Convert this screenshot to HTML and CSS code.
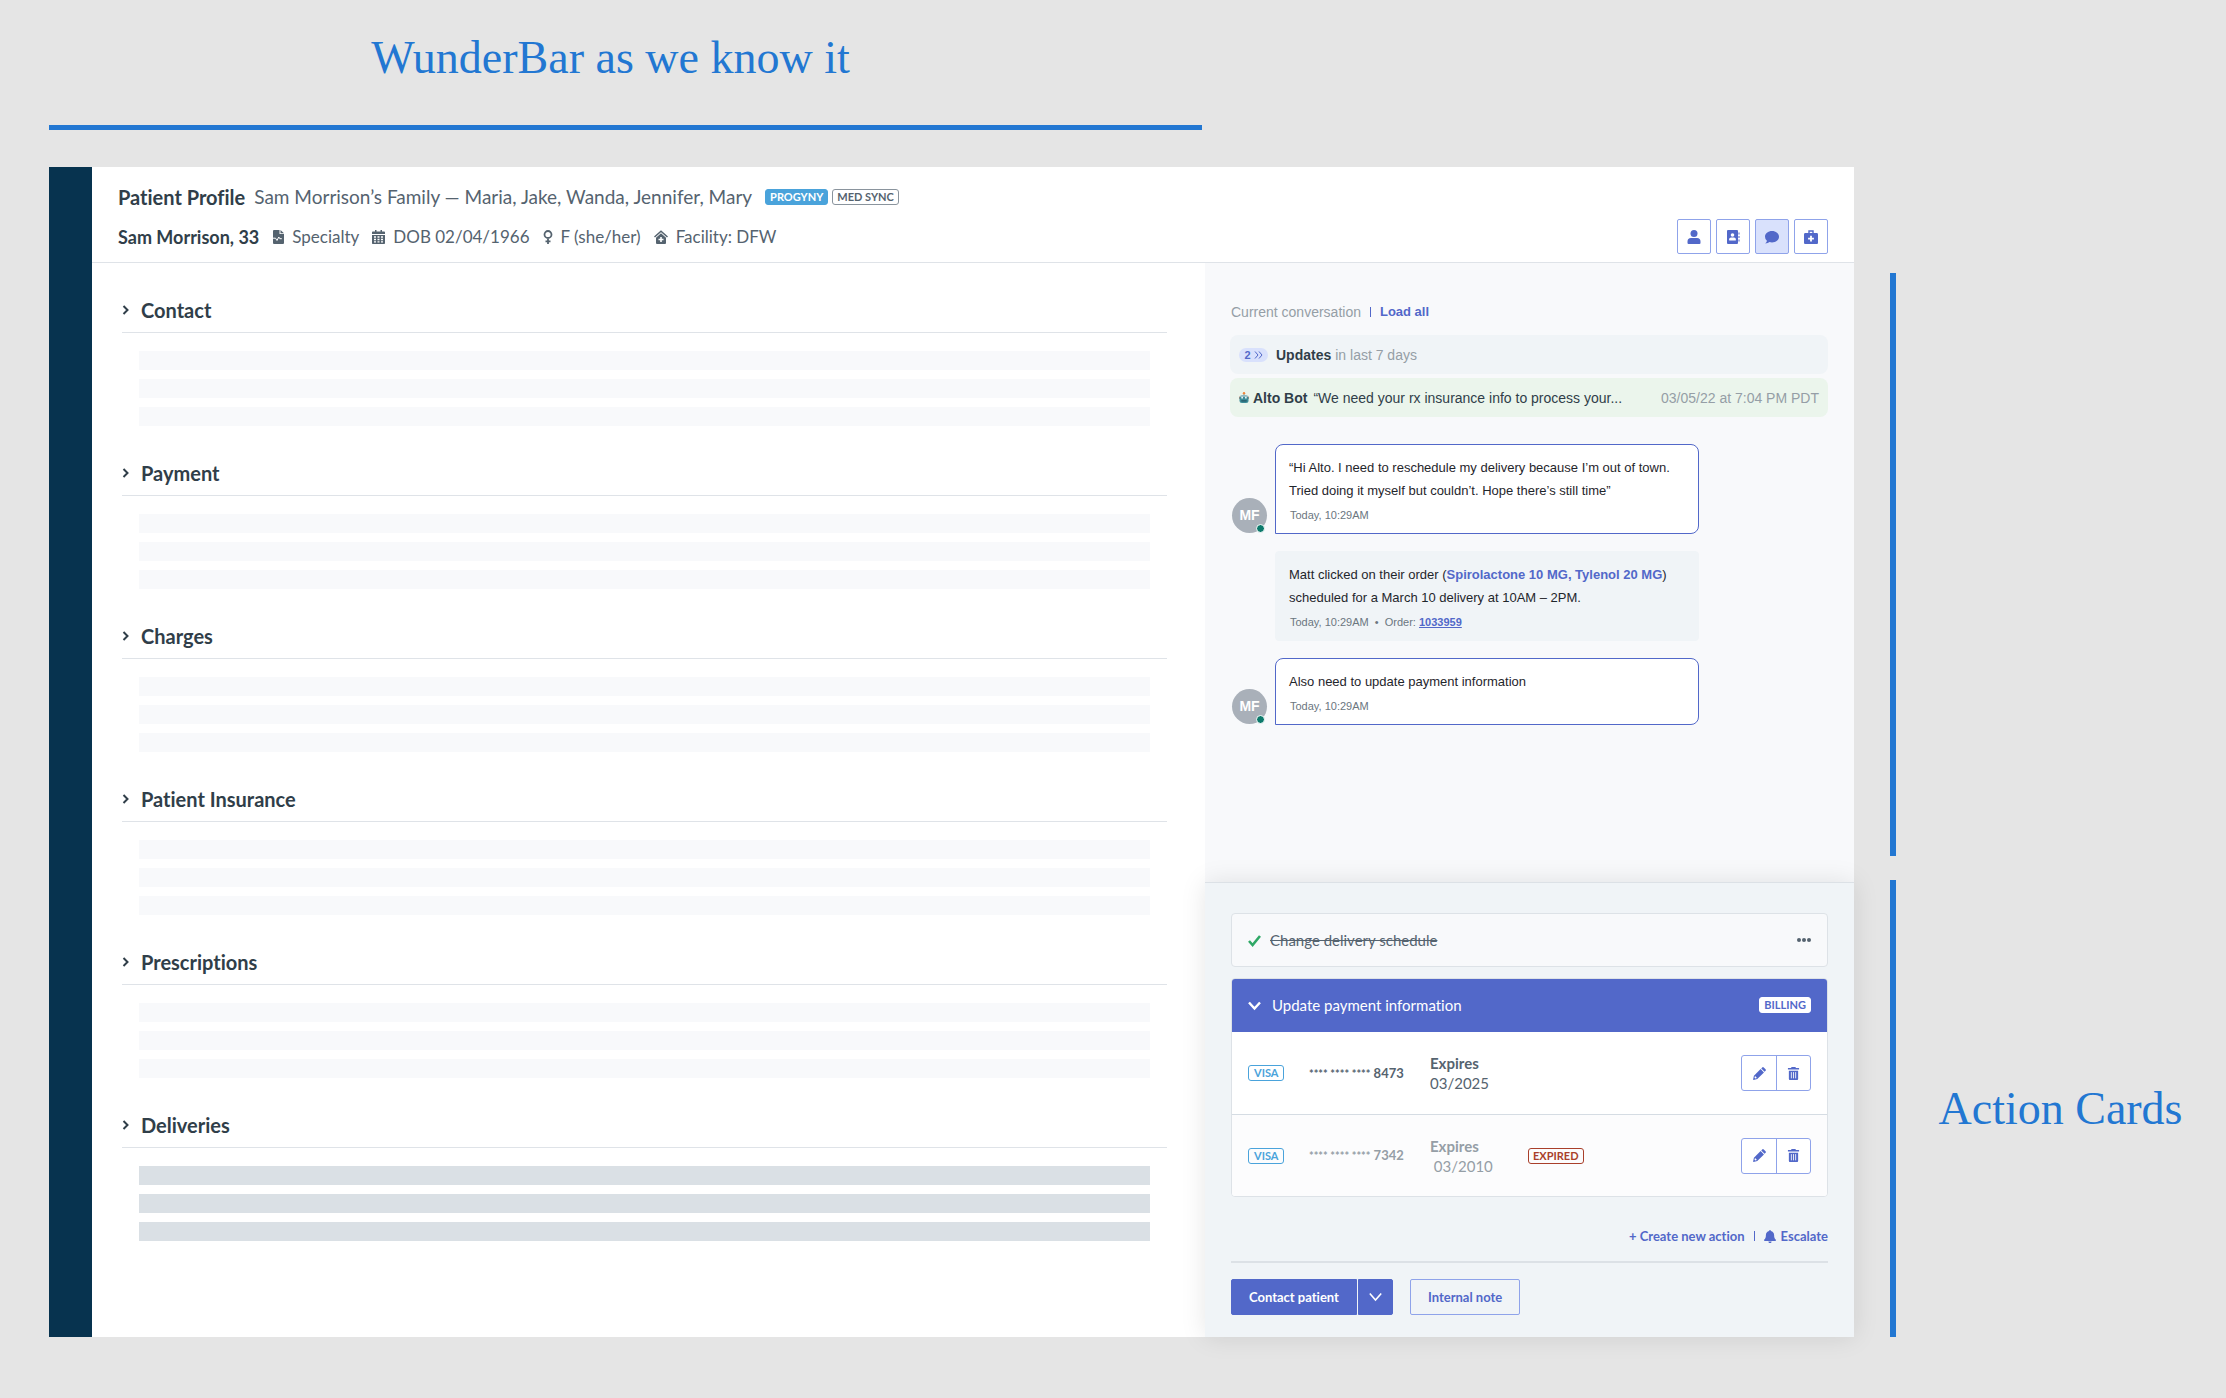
FILE: index.html
```html
<!DOCTYPE html>
<html lang="en">
<head>
    <meta charset="UTF-8">
    <meta name="viewport" content="width=device-width, initial-scale=1.0">
    <title>WunderBar</title>
    <link rel="stylesheet" href="styles.css">
</head>
<body>
    <!-- Icon sprite -->
    <svg class="sprite" aria-hidden="true">
        <symbol id="icon-right" viewBox="0 0 8 12"><path d="M1.500 2l4 4-4 4" fill="none" stroke="currentColor" stroke-width="2"/></symbol>
        <symbol id="icon-pencil" viewBox="0 0 14 14"><path d="M9.900.500a1.200 1.200 0 0 1 1.700 0l1.900 1.900a1.200 1.200 0 0 1 0 1.700l-1 1-3.600-3.600zM8.200 2.200l3.600 3.600-7.200 7.200L.600 13.900.100 13.400 1 9.400z"/><path d="M2.200 9.800l2 2-1.700.7-.9-.9z" fill="#fff"/></symbol>
        <symbol id="icon-trash" viewBox="0 0 14 14"><path d="M5 0h4l.7 1H13v1.800H1V1h3.300zM2 4h10v9a1 1 0 0 1-1 1H3a1 1 0 0 1-1-1z"/><path d="M4.700 5.500v6.700M7 5.500v6.700M9.300 5.500v6.700" stroke="#fff" stroke-width=".9"/></symbol>
    </svg>

    <div class="page">
        <div class="left-note">
            <h1 class="note">WunderBar as we know it</h1>
        </div>

        <div class="app">
            <nav class="sidebar"></nav>

            <header class="header">
                <div class="header-info">
                    <div class="profile-line">
                        <h2>Patient Profile</h2>
                        <span>Sam Morrison’s Family — Maria, Jake, Wanda, Jennifer, Mary</span>
                        <span class="tags">
                            <span class="tag tag-progyny">PROGYNY</span>
                            <span class="tag tag-sync">MED SYNC</span>
                        </span>
                    </div>
                    <div class="patient-line">
                        <strong>Sam Morrison, 33</strong>
                        <span class="fact">
                            <svg width="12" height="14" viewBox="0 0 12 14"><path d="M2 0h5.500v4H12v9a1 1 0 0 1-1 1H2a1 1 0 0 1-1-1V1a1 1 0 0 1 1-1zM8.500 0L12 3.200H8.500z"/><path d="M0 8.200h3.500l1.500 2.300 1.800-3.500 1 1.700h2" fill="none" stroke="#fff" stroke-width="1"/></svg>
                            Specialty
                        </span>
                        <span class="fact">
                            <svg width="13" height="14" viewBox="0 0 13 14"><path d="M3 0h1.500v1.500h4V0H10v1.500h2c.6 0 1 .4 1 1V4H0V2.500c0-.6.4-1 1-1h2zM0 5h13v8c0 .6-.4 1-1 1H1c-.6 0-1-.4-1-1z"/><path d="M2 6.300h2v1.500H2zm3.500 0h2v1.500h-2zm3.500 0h2v1.500H9zM2 8.800h2v1.400H2zm3.500 0h2v1.400h-2zm3.500 0h2v1.400H9zM2 11.300h2v1.300H2zm3.500 0h2v1.300h-2zm3.500 0h2v1.300H9z" fill="#fff"/></svg>
                            DOB 02/04/1966
                        </span>
                        <span class="fact">
                            <svg width="10" height="14" viewBox="0 0 10 14"><path d="M5 1a3.500 3.500 0 1 1 0 7 3.500 3.500 0 0 1 0-7zM5 8v6M2.500 11.300h5" fill="none" stroke="currentColor" stroke-width="1.800"/></svg>
                            F (she/her)
                        </span>
                        <span class="fact">
                            <svg width="14" height="14" viewBox="0 0 14 14"><path d="M.5 7L7 1.200 13.500 7" fill="none" stroke="currentColor" stroke-width="1.500"/><path d="M7 3.300l5 4.400V13a1 1 0 0 1-1 1H3a1 1 0 0 1-1-1V7.700z"/><path d="M6.200 7h1.600v1.700h1.700v1.600H7.800V12H6.200v-1.700H4.500V8.700h1.700z" fill="#fff"/></svg>
                            Facility: DFW
                        </span>
                    </div>
                </div>
                <div class="header-buttons">
                    <button class="icon-button" aria-label="Patient">
                        <svg width="14" height="14" viewBox="0 0 14 14"><circle cx="7" cy="3.500" r="3.500"/><path d="M4 8h6a3.500 3.500 0 0 1 3.500 3.500V13a1 1 0 0 1-1 1h-11a1 1 0 0 1-1-1v-1.500A3.500 3.500 0 0 1 4 8z"/></svg>
                    </button>
                    <button class="icon-button" aria-label="Address book">
                        <svg width="14" height="14" viewBox="0 0 14 14"><path d="M2 0h9a1 1 0 0 1 1 1v12a1 1 0 0 1-1 1H2a1 1 0 0 1-1-1V1a1 1 0 0 1 1-1zM12.500 2.500h1v2h-1zm0 3.500h1v2h-1zm0 3.500h1v2h-1z"/><circle cx="6.500" cy="5" r="1.800" fill="#fff"/><path d="M5 7.500h3c1 0 1.800.8 1.800 1.800v1.200H3.200V9.300C3.200 8.300 4 7.500 5 7.500z" fill="#fff"/></svg>
                    </button>
                    <button class="icon-button active" aria-label="Conversation">
                        <svg width="14" height="14" viewBox="0 0 14 14"><path d="M7 1c3.900 0 7 2.500 7 5.700s-3.100 5.700-7 5.700a8 8 0 0 1-2.500-.4C3.500 12.800 2 13.400.3 13.400c.8-.8 1.500-1.800 1.600-2.700A5.200 5.200 0 0 1 0 6.700C0 3.500 3.100 1 7 1z"/></svg>
                    </button>
                    <button class="icon-button" aria-label="Medical">
                        <svg width="14" height="14" viewBox="0 0 14 14"><path d="M5 3.500V1h4v2.500" fill="none" stroke="currentColor" stroke-width="1.400"/><path d="M1.300 3h11.400c.7 0 1.300.6 1.300 1.300v8.400c0 .7-.6 1.300-1.300 1.300H1.300C.6 14 0 13.400 0 12.700V4.300C0 3.600.6 3 1.300 3z"/><path d="M6.100 5.700h1.800v2h2v1.700h-2v2H6.100v-2h-2V7.700h2z" fill="#fff"/></svg>
                    </button>
                </div>
            </header>

            <!-- Record sections -->
            <main class="sections">
                <section class="section">
                    <h3><button class="section-toggle"><svg width="8" height="12"><use href="#icon-right"/></svg>Contact</button></h3>
                    <div class="rows"><div></div><div></div><div></div></div>
                </section>
                <section class="section">
                    <h3><button class="section-toggle"><svg width="8" height="12"><use href="#icon-right"/></svg>Payment</button></h3>
                    <div class="rows"><div></div><div></div><div></div></div>
                </section>
                <section class="section">
                    <h3><button class="section-toggle"><svg width="8" height="12"><use href="#icon-right"/></svg>Charges</button></h3>
                    <div class="rows"><div></div><div></div><div></div></div>
                </section>
                <section class="section">
                    <h3><button class="section-toggle"><svg width="8" height="12"><use href="#icon-right"/></svg>Patient Insurance</button></h3>
                    <div class="rows"><div></div><div></div><div></div></div>
                </section>
                <section class="section">
                    <h3><button class="section-toggle"><svg width="8" height="12"><use href="#icon-right"/></svg>Prescriptions</button></h3>
                    <div class="rows"><div></div><div></div><div></div></div>
                </section>
                <section class="section">
                    <h3><button class="section-toggle"><svg width="8" height="12"><use href="#icon-right"/></svg>Deliveries</button></h3>
                    <div class="rows rows-dark"><div></div><div></div><div></div></div>
                </section>
            </main>

            <aside class="side">
                <div class="chat">
                    <div class="chat-title">
                        <span>Current conversation</span>
                        <span class="bar"></span>
                        <a href="#">Load all</a>
                    </div>

                    <div class="notice">
                        <span class="count">2 <svg width="9" height="8" viewBox="0 0 9 8"><path d="M1 .5L4 4 1 7.500M5 .5L8 4 5 7.500" fill="none" stroke="currentColor"/></svg></span>
                        <strong>Updates</strong>
                        <span class="muted">in last 7 days</span>
                    </div>
                    <div class="notice notice-bot">
                        <svg width="10" height="11" viewBox="0 0 10 11"><circle cx="5" cy="1.200" r="1.200" fill="#f0853a"/><path d="M4.500 2.400h1v1h-1z" fill="#4d6570"/><path d="M0 4.500h10v2.500H0z" fill="#c98f7c"/><path d="M3 3h4c1.200 0 2 .9 2 2H1c0-1.100.8-2 2-2z" fill="#8fb9c0"/><path d="M.5 5h9v3.500A2.500 2.500 0 0 1 7 11H3A2.500 2.500 0 0 1 .5 8.500z" fill="#3d8c98"/><path d="M2.300 4.800h1.700v1.700H2.300zm3.700 0h1.700v1.700H6z" fill="#e4f2f4"/><path d="M2.300 8h5.400v1.700H2.300z" fill="#2a6472"/></svg>
                        <strong>Alto Bot</strong>
                        <span class="preview">“We need your rx insurance info to process your...</span>
                        <time class="muted">03/05/22 at 7:04 PM PDT</time>
                    </div>

                    <div class="messages">
                        <div class="message">
                            <div class="avatar">MF<span class="online"></span></div>
                            <div class="bubble">
                                <p>“Hi Alto. I need to reschedule my delivery because I’m out of town.<br>Tried doing it myself but couldn’t. Hope there’s still time”</p>
                                <div class="meta">Today, 10:29AM</div>
                            </div>
                        </div>
                        <div class="message">
                            <div class="bubble bubble-event">
                                <p>Matt clicked on their order (<a href="#">Spirolactone 10 MG, Tylenol 20 MG</a>)<br>scheduled for a March 10 delivery at 10AM – 2PM.</p>
                                <div class="meta">Today, 10:29AM &nbsp;•&nbsp; Order: <a href="#">1033959</a></div>
                            </div>
                        </div>
                        <div class="message">
                            <div class="avatar">MF<span class="online"></span></div>
                            <div class="bubble">
                                <p>Also need to update payment information</p>
                                <div class="meta">Today, 10:29AM</div>
                            </div>
                        </div>
                    </div>
                </div>

                <!-- Action cards -->
                <div class="actions">
                    <div class="card card-done">
                        <svg width="13" height="13" viewBox="0 0 13 13"><path d="M1 7l3.600 4L12 2" fill="none" stroke="#2fa866" stroke-width="2.600"/></svg>
                        <s>Change delivery schedule</s>
                        <button class="more" aria-label="More"><svg width="14" height="4" viewBox="0 0 14 4"><circle cx="2" cy="2" r="2"/><circle cx="7" cy="2" r="2"/><circle cx="12" cy="2" r="2"/></svg></button>
                    </div>

                    <div class="card">
                        <div class="card-head">
                            <svg width="13" height="13" viewBox="0 0 13 13"><path d="M1 3.500l5.500 6 5.500-6" fill="none" stroke="currentColor" stroke-width="2.400"/></svg>
                            <span>Update payment information</span>
                            <span class="tag tag-billing">BILLING</span>
                        </div>
                        <div class="payment">
                            <span class="visa"><span class="tag tag-visa">VISA</span></span>
                            <span class="digits"><span class="stars">**** **** ****</span> 8473</span>
                            <span class="expires"><strong>Expires</strong><br>03/2025</span>
                            <span class="state"></span>
                            <span class="edit-group">
                                <button aria-label="Edit"><svg width="13" height="13"><use href="#icon-pencil"/></svg></button>
                                <button aria-label="Delete"><svg width="13" height="13"><use href="#icon-trash"/></svg></button>
                            </span>
                        </div>
                        <div class="payment payment-expired">
                            <span class="visa"><span class="tag tag-visa">VISA</span></span>
                            <span class="digits"><span class="stars">**** **** ****</span> 7342</span>
                            <span class="expires"><strong>Expires</strong><br>&nbsp;03/2010</span>
                            <span class="state"><span class="tag tag-expired">EXPIRED</span></span>
                            <span class="edit-group">
                                <button aria-label="Edit"><svg width="13" height="13"><use href="#icon-pencil"/></svg></button>
                                <button aria-label="Delete"><svg width="13" height="13"><use href="#icon-trash"/></svg></button>
                            </span>
                        </div>
                    </div>

                    <div class="action-links">
                        <a href="#">+ Create new action</a>
                        <span class="bar"></span>
                        <a href="#"><svg width="12" height="13" viewBox="0 0 12 13"><path d="M6 0c.5 0 .9.400.9.900 1.900.4 3.200 2 3.200 4 0 2.800.7 3.900 1.600 4.700.5.500.3 1.300-.5 1.300H.8c-.8 0-1-.8-.5-1.300C1.200 8.800 1.900 7.700 1.900 4.900c0-2 1.300-3.600 3.200-4 0-.5.4-.9.9-.9zM4.400 11.500h3.200a1.600 1.600 0 0 1-3.200 0z"/></svg>Escalate</a>
                    </div>

                    <div class="action-buttons">
                        <div class="split">
                            <button class="primary">Contact patient</button>
                            <button class="primary primary-toggle" aria-label="Contact options"><svg width="13" height="10" viewBox="0 0 13 10"><path d="M.8 1.500l5.700 6.500 5.700-6.500" fill="none" stroke="currentColor" stroke-width="1.600"/></svg></button>
                        </div>
                        <button class="secondary">Internal note</button>
                    </div>
                </div>
            </aside>
        </div>

        <div class="markers">
            <div class="marker"></div>
            <div class="marker marker-actions"></div>
        </div>
        <div class="right-note">
            <h1 class="note">Action Cards</h1>
        </div>
    </div>
</body>
</html>
```

FILE: styles.css
```css
* {
    box-sizing: border-box;
}

body {
    margin: 0;
    background-color: #e5e5e5;
    font-family: Lato, sans-serif;
    font-variant-ligatures: none;
    color: #55636f;
}

h1, h2, h3, p {
    margin: 0;
}

a {
    color: #5268c9;
    text-decoration: none;
}

button {
    font-family: inherit;
    font-variant-ligatures: inherit;
    cursor: pointer;
}

svg {
    fill: currentColor;
    flex-shrink: 0;
}

.sprite {
    display: none;
}

.page {
    display: grid;
    grid-template-columns: minmax(0, 1fr) 6px 286px;
    grid-template-rows: auto 1fr;
    min-height: 100vh;
    padding: 0 44px 61px 49px;
}

/* Annotations */

.note {
    font-family: "Liberation Serif", serif;
    font-weight: normal;
    font-size: 46px;
    line-height: 56px;
    color: #2277d2;
    text-align: center;
    white-space: nowrap;
}

.left-note {
    grid-column: 1 / -1;
    margin: 0 980px 37px 0;
    padding: 30px 30px 39px 0;
    border-bottom: 5px solid #2277d2;
}

.markers {
    display: flex;
    flex-direction: column;
    gap: 24px;
    padding-top: 106px;
}

.marker {
    flex: 1;
    background-color: #2277d2;
}

.marker-actions {
    flex: none;
    height: 457px;
}

.right-note {
    display: flex;
    align-items: center;
    justify-content: center;
    align-self: end;
    height: 457px;
    padding-left: 43px;
}

/* App frame */

.app {
    display: grid;
    grid-template-columns: 43px minmax(0, 1fr) 649px;
    grid-template-rows: auto 1fr;
    background-color: white;
    margin-right: 36px;
}

.sidebar {
    grid-row: 1 / 3;
    background-color: #07334f;
}

.header {
    grid-column: 2 / 4;
    display: flex;
    justify-content: space-between;
    align-items: flex-end;
    height: 96px;
    padding: 0 26px 8px;
    border-bottom: 1px solid #dfe3e8;
}

.header-info {
    display: flex;
    flex-direction: column;
    gap: 16px;
    padding-bottom: 5px;
}

.profile-line, .patient-line {
    display: flex;
    align-items: center;
    line-height: 24px;
}

.profile-line {
    gap: 9px;
    font-size: 19px;
}

.profile-line h2 {
    font-size: 20px;
    color: #303e49;
}

.patient-line {
    gap: 13px;
    font-size: 17px;
}

.patient-line strong {
    font-size: 18px;
    color: #303e49;
}

.fact {
    display: flex;
    align-items: center;
    gap: 8px;
}

.tags {
    display: flex;
    gap: 4px;
    margin-left: 4px;
}

.tag {
    display: inline-block;
    height: 16px;
    padding: 0 4px;
    border: 1px solid currentColor;
    border-radius: 3px;
    font-size: 11px;
    line-height: 14px;
    font-weight: bold;
}

.tag-progyny {
    background-color: #4aa3db;
    border-color: #4aa3db;
    color: white;
}

.tag-sync {
    border-color: #8a949d;
}

.tag-billing {
    background-color: white;
    border-color: white;
    color: #5268c9;
    margin-left: auto;
}

.tag-visa {
    padding: 0 5px;
    color: #4aa3db;
}

.tag-expired {
    color: #a93f2b;
}

.header-buttons {
    display: flex;
    gap: 5px;
}

.icon-button {
    display: flex;
    align-items: center;
    justify-content: center;
    width: 34px;
    height: 35px;
    padding: 0;
    border: 1px solid #8fa3ea;
    border-radius: 2px;
    background-color: white;
    color: #5268c9;
}

.icon-button.active {
    background-color: #d9e1fc;
}

/* Record sections */

.sections {
    display: flex;
    flex-direction: column;
    gap: 35px;
    padding: 35px 38px 96px 30px;
}

.section h3 {
    border-bottom: 1px solid #dfe3e8;
    padding-bottom: 10px;
}

.section-toggle {
    display: flex;
    align-items: center;
    gap: 11px;
    padding: 0;
    border: none;
    background: none;
    font-size: 20px;
    line-height: 24px;
    font-weight: bold;
    color: #303e49;
}

.rows {
    display: flex;
    flex-direction: column;
    gap: 9px;
    padding: 18px 17px 0;
}

.rows div {
    height: 19px;
    background-color: #f8f9fb;
}

.rows-dark div {
    background-color: #dae0e5;
}

/* Conversation */

.side {
    display: flex;
    flex-direction: column;
}

.chat {
    flex: 1;
    padding: 37px 26px 40px 25px;
    background-color: #f8f9fb;
    font-family: "Liberation Sans", Arial, sans-serif;
    font-size: 14px;
}

.chat-title {
    display: flex;
    align-items: center;
    gap: 9px;
    margin-bottom: 11px;
    padding-left: 1px;
    line-height: 24px;
    color: #959ea6;
}

.chat-title a {
    font-size: 13px;
    font-weight: bold;
}

.bar {
    width: 1px;
    height: 10px;
    background-color: #5268c9;
}

.notice {
    display: flex;
    align-items: center;
    gap: 4px;
    height: 39px;
    padding: 0 9px;
    margin-bottom: 4px;
    border-radius: 8px;
    background-color: #f0f4f7;
    color: #303e49;
}

.notice-bot {
    background-color: #ebf5ec;
}

.muted {
    color: #959ea6;
}

.notice time {
    margin-left: auto;
}

.count {
    display: flex;
    align-items: center;
    justify-content: center;
    gap: 3px;
    width: 29px;
    height: 14px;
    margin-right: 4px;
    border-radius: 7px;
    background-color: #d9e1fc;
    font-size: 11px;
    font-weight: bold;
    color: #5268c9;
}

.preview {
    margin-left: 2px;
}

.messages {
    display: flex;
    flex-direction: column;
    gap: 17px;
    margin-top: 27px;
}

.message {
    display: flex;
    align-items: flex-end;
    padding-left: 45px;
}

.avatar {
    position: relative;
    width: 35px;
    height: 35px;
    margin: 0 8px 1px -43px;
    border-radius: 50%;
    background-color: #a9b0b9;
    color: white;
    line-height: 35px;
    font-weight: bold;
    text-align: center;
}

.online {
    position: absolute;
    right: 2px;
    bottom: 0;
    width: 9px;
    height: 9px;
    border: 1px solid white;
    border-radius: 50%;
    background-color: #0d7a6c;
}

.bubble {
    width: 424px;
    padding: 11px 13px 9px;
    border: 1px solid #5268c9;
    border-radius: 8px 8px 8px 0;
    background-color: white;
    color: #1f262c;
    font-size: 13px;
    line-height: 23px;
    white-space: nowrap;
}

.bubble-event {
    border-color: #f0f4f7;
    border-radius: 4px;
    background-color: #f0f4f7;
}

.bubble a {
    font-weight: bold;
}

.meta {
    padding: 4px 0 0 1px;
    font-size: 11px;
    line-height: 18px;
    color: #6b7680;
}

.meta a {
    text-decoration: underline;
}

/* Action cards */

.actions {
    position: relative;
    padding: 30px 26px 22px;
    border-top: 1px solid #dce1e6;
    background-color: #f0f4f7;
    box-shadow: 0 0 24px rgba(0, 0, 0, 0.1);
}

.card {
    border: 1px solid #dde2e7;
    border-radius: 4px;
    background-color: white;
    font-size: 15px;
    overflow: hidden;
}

.card-done {
    display: flex;
    align-items: center;
    gap: 9px;
    height: 54px;
    padding: 0 16px;
    margin-bottom: 11px;
    background-color: #f8f9fb;
}

.more {
    display: flex;
    margin-left: auto;
    padding: 0;
    border: none;
    background: none;
    color: #55636f;
}

.card-head {
    display: flex;
    align-items: center;
    gap: 11px;
    height: 54px;
    margin: -1px -1px 0;
    padding: 0 17px;
    background-color: #5268c9;
    color: white;
}

.payment {
    display: grid;
    grid-template-columns: 61px 121px 98px 1fr auto;
    align-items: center;
    height: 82px;
    padding: 0 16px;
    line-height: 20px;
}

.payment-expired {
    border-top: 1px solid #d5dce3;
    background-color: #fcfcfd;
    color: #959ea6;
}

.visa, .state {
    display: flex;
}

.digits {
    font-size: 13px;
    font-weight: bold;
}

.stars {
    font-size: 11px;
}

.edit-group {
    display: flex;
    border: 1px solid #8fa3ea;
    border-radius: 3px;
    background-color: white;
}

.edit-group button {
    display: flex;
    align-items: center;
    justify-content: center;
    width: 34px;
    height: 34px;
    padding: 0;
    border: none;
    background: none;
    color: #5268c9;
}

.edit-group button + button {
    border-left: 1px solid #8fa3ea;
}

.action-links {
    display: flex;
    justify-content: flex-end;
    align-items: center;
    gap: 9px;
    padding: 29px 0 15px;
    border-bottom: 2px solid #dce1e6;
    font-size: 13px;
    line-height: 20px;
    font-weight: bold;
}

.action-links a {
    display: flex;
    align-items: center;
    gap: 5px;
}

.action-buttons {
    display: flex;
    gap: 17px;
    padding-top: 16px;
}

.split {
    display: flex;
    gap: 1px;
}

.primary, .secondary {
    height: 36px;
    padding: 0 17px;
    border: 1px solid #5268c9;
    border-radius: 2px 0 0 2px;
    background-color: #5268c9;
    color: white;
    font-size: 13px;
    font-weight: bold;
}

.primary-toggle {
    display: flex;
    align-items: center;
    justify-content: center;
    width: 35px;
    padding: 0;
    border-radius: 0 2px 2px 0;
}

.secondary {
    border-color: #8fa3ea;
    border-radius: 2px;
    background-color: transparent;
    color: #5268c9;
}
```
